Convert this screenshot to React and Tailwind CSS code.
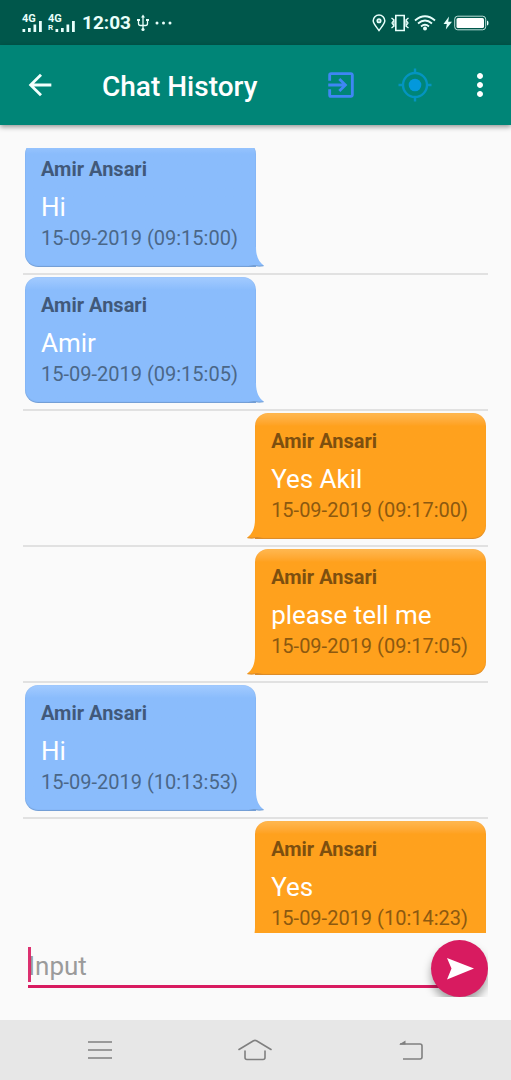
import { MdArrowBack, MdExitToApp, MdMoreVert } from "react-icons/md";

const messages = [
  { name: "Amir Ansari", text: "Hi", time: "15-09-2019 (09:15:00)", mine: false },
  { name: "Amir Ansari", text: "Amir", time: "15-09-2019 (09:15:05)", mine: false },
  { name: "Amir Ansari", text: "Yes Akil", time: "15-09-2019 (09:17:00)", mine: true },
  { name: "Amir Ansari", text: "please tell me", time: "15-09-2019 (09:17:05)", mine: true },
  { name: "Amir Ansari", text: "Hi", time: "15-09-2019 (10:13:53)", mine: false },
  { name: "Amir Ansari", text: "Yes", time: "15-09-2019 (10:14:23)", mine: true },
];

function SignalBars() {
  return (
    <svg className="h-2 w-5" viewBox="0 0 20 8" overflow="visible" fill="currentColor" aria-hidden="true">
      <path d="M0.500 5h2.700v3h-2.700zM6 4h2.700v4h-2.700zM11.500 0.500h2.700v7.500h-2.700zM17-3h2.800v11h-2.800z" />
    </svg>
  );
}

function StatusBar() {
  return (
    <div className="flex h-[45px] shrink-0 items-center bg-[#00574b] px-[22px] text-[#e8fffb]">
      <div className="flex w-[26px] flex-col">
        <span className="text-[11px] leading-[10px] font-bold">4G</span>
        <SignalBars />
      </div>
      <div className="flex w-[34px] flex-col">
        <span className="text-[11px] leading-[10px] font-bold">4G</span>
        <div className="flex h-2 items-center gap-[2px]">
          <span className="text-[8px] leading-[8px] font-bold">R</span>
          <SignalBars />
        </div>
      </div>
      <span className="text-[19px] leading-6 font-bold">12:03</span>
      <svg className="ml-[5px] h-[18px] w-[14px]" viewBox="0 0 14 18" fill="none" stroke="currentColor" strokeWidth="1.300" aria-hidden="true">
        <path d="M7 2v13M2.500 6v3.500q0 2 2 2h5q2 0 2-2v-3.500" />
        <path d="M7 0.500l2 3h-4zM1 5h3v2h-3zM10 5h3v2h-3z" fill="currentColor" stroke="none" />
        <circle cx="7" cy="15.500" r="1.600" fill="currentColor" stroke="none" />
      </svg>
      <svg className="ml-[5px] h-[4px] w-[18px]" viewBox="0 0 18 4" fill="currentColor" aria-hidden="true">
        <circle cx="2" cy="2" r="1.500" />
        <circle cx="8.500" cy="2" r="1.500" />
        <circle cx="15" cy="2" r="1.500" />
      </svg>
      <div className="ml-auto flex items-center">
        <svg className="h-[18px] w-[14px]" viewBox="0 0 14 18" fill="none" stroke="currentColor" strokeWidth="1.500" aria-hidden="true">
          <path d="M7 16.500C4 12.500 1.200 9.500 1.200 6.800a5.800 5.800 0 0 1 11.600 0C12.800 9.500 10 12.500 7 16.500z" />
          <circle cx="7" cy="6.800" r="1.800" fill="currentColor" fillOpacity="0.500" />
        </svg>
        <svg className="ml-[5px] h-[18px] w-[18px]" viewBox="0 0 18 18" fill="none" stroke="currentColor" strokeWidth="1.600" aria-hidden="true">
          <path d="M4.800 1.500h8.400v15h-8.400z" />
          <path d="M0.500 4l2.500 2-2 3 2 3-2.500 2M17.500 4l-2.500 2 2 3-2 3 2.500 2M3 6v6M15 6v6" strokeWidth="1.300" />
        </svg>
        <svg className="ml-[5px] h-[16px] w-[22px]" viewBox="0 0 22 16" fill="none" stroke="currentColor" strokeWidth="1.800" aria-hidden="true">
          <path d="M1 5.500Q11-3 21 5.500M4 8.500Q11 2.500 18 8.500M7 11.500Q11 8 15 11.500" />
          <circle cx="11" cy="13.500" r="2" fill="currentColor" stroke="none" />
        </svg>
        <svg className="ml-[7px] h-[14px] w-[9px]" viewBox="0 0 9 14" fill="currentColor" aria-hidden="true">
          <path d="M6 0.500L0.500 8h3.300L2.800 13.500 9 5.800H5.200z" />
        </svg>
        <svg className="ml-[2px] h-[16px] w-[35px]" viewBox="0 0 35 16" fill="none" aria-hidden="true">
          <rect x="0.700" y="1.200" width="31" height="13.600" rx="3" stroke="currentColor" strokeOpacity="0.800" />
          <rect x="2.500" y="3" width="27.500" height="10" rx="1.500" fill="#ffffff" />
          <path d="M33 5.500q1.500 0 1.500 2.500t-1.500 2.500z" fill="currentColor" />
        </svg>
      </div>
    </div>
  );
}

function AppBar() {
  return (
    <header className="relative flex h-20 shrink-0 items-center bg-[#008577] shadow-[0_2px_5px_rgba(0,0,0,0.4)]">
      <button type="button" aria-label="Back" className="flex h-full w-20 items-center justify-center">
        <MdArrowBack className="size-[34px] text-[#f2fffd]" />
      </button>
      <h1 className="ml-[22px] flex-1 pt-1 text-[28px] leading-8 font-medium whitespace-nowrap text-white">Chat History</h1>
      <button type="button" aria-label="Exit" className="flex h-full w-20 items-center justify-center">
        <MdExitToApp className="size-[34px] text-[#3f86f4]" />
      </button>
      <button type="button" aria-label="My location" className="flex h-full w-[68px] items-center justify-center">
        <svg className="size-9" viewBox="0 0 36 36" aria-hidden="true">
          <circle cx="18" cy="18" r="12" fill="none" stroke="#0494c0" strokeWidth="2.400" />
          <path d="M18 1.500v5M18 29.500v5M1.500 18h5M29.500 18h5" stroke="#0494c0" strokeWidth="2.400" />
          <circle cx="18" cy="18" r="6.300" fill="#0398dc" />
        </svg>
      </button>
      <button type="button" aria-label="More options" className="flex h-full w-[62px] items-center justify-center">
        <MdMoreVert className="size-9 text-white" />
      </button>
    </header>
  );
}

function Tail({ mine }) {
  if (mine) {
    return (
      <svg className="absolute bottom-0 -left-2 h-5 w-4" viewBox="0 0 16 20" aria-hidden="true">
        <path d="M8 0C8 10 5 15 0 18.800Q5 19.600 10 18.500L16 19V0z" fill="#ffa11d" />
        <path d="M0.500 18.800Q5 19.600 10 18.500L16 19.500" fill="none" stroke="#d98a2b" />
      </svg>
    );
  }
  return (
    <svg className="absolute -right-2 bottom-0 h-5 w-4" viewBox="0 0 16 20" aria-hidden="true">
      <path d="M8 0C8 10 11 15 16 18.800Q11 19.600 6 18.500L0 19V0z" fill="#8abcfc" />
      <path d="M15.500 18.800Q11 19.600 6 18.500L0 19.500" fill="none" stroke="#739dd2" />
    </svg>
  );
}

function Message({ name, text, time, mine }) {
  const bubble = mine
    ? "rounded-br-[13px] bg-[#ffa11d] bg-linear-to-b from-[#ffb850] to-[#ffa11d] to-[13px] shadow-[inset_0_-1px_1px_#d98a2b,inset_0_0_1px_#f0a040]"
    : "rounded-bl-[13px] bg-[#8abcfc] bg-linear-to-b from-[#a3cbff] to-[#8abcfc] to-[13px] shadow-[inset_0_-1px_1px_#739dd2,inset_0_0_1px_#7dabe4]";
  return (
    <li className={`flex border-b-2 border-[#e1e1e1] px-[2px] pt-[2px] pb-[6px] ${mine ? "justify-end" : "justify-start"}`}>
      <article className={`relative rounded-t-[13px] pt-[15px] pr-[18px] pb-[15px] pl-4 ${bubble}`}>
        <Tail mine={mine} />
        <h2 className={`text-[20px] leading-[26px] font-bold ${mine ? "text-[#7d4f0f]" : "text-[#41597a]"}`}>{name}</h2>
        <p className="mt-2 text-[26px] leading-[34px] text-white">{text}</p>
        <p className={`text-[20px] leading-7 ${mine ? "text-[#8c5910]" : "text-[#4a6788]"}`}>{time}</p>
      </article>
    </li>
  );
}

function Composer() {
  return (
    <form className="mt-[7px] flex h-[57px] shrink-0 overflow-hidden" onSubmit={(e) => e.preventDefault()}>
      <div className="relative ml-[5px] flex min-w-0 flex-1 pb-[9px]">
        <input
          type="text"
          aria-label="Input"
          placeholder="Input"
          className="min-w-0 flex-1 border-b-3 border-[#d81b60] bg-transparent pt-2 text-[26px] text-[#333333] caret-[#d81b60] outline-none placeholder:text-[#9b9b9b]"
        />
        <span className="absolute top-[7px] left-0 h-[35px] w-[3px] bg-[#d81b60]/90" />
      </div>
      <button
        type="submit"
        aria-label="Send"
        className="relative -ml-4 flex size-[57px] shrink-0 items-center justify-center rounded-full bg-[#d81b60] shadow-[0_6px_9px_rgba(0,0,0,0.35)]"
      >
        <svg className="h-6 w-7" viewBox="0 0 28 24" fill="#ffffff" aria-hidden="true">
          <path d="M1 1L28 11.500 1 22.500 5.500 11.500z" />
        </svg>
      </button>
    </form>
  );
}

function NavBar() {
  return (
    <nav className="flex h-[60px] shrink-0 items-center justify-around bg-[#e7e7e7] px-[22px] text-[#808080]">
      <button type="button" aria-label="Recent apps" className="flex h-full w-20 items-center justify-center">
        <svg className="h-5 w-6" viewBox="0 0 24 20" stroke="currentColor" strokeWidth="1.600" aria-hidden="true">
          <path d="M0 2h24M0 10h24M0 18h24" />
        </svg>
      </button>
      <button type="button" aria-label="Home" className="flex h-full w-20 items-center justify-center">
        <svg className="h-[22px] w-[34px]" viewBox="0 0 34 22" fill="none" stroke="currentColor" strokeWidth="1.600" strokeLinecap="round" aria-hidden="true">
          <path d="M1 10.500L15.500 1.800q1.500-0.800 3 0L33 10.500M7 12v6.500q0 2 2 2h16q2 0 2-2V12" />
        </svg>
      </button>
      <button type="button" aria-label="Navigate back" className="flex h-full w-20 items-center justify-center">
        <svg className="h-5 w-6" viewBox="0 0 24 20" fill="none" stroke="currentColor" strokeWidth="1.600" aria-hidden="true">
          <path d="M1 4h20q2 0 2 2v11q0 2-2 2H4" />
          <path d="M0 4.500L6.500 0.500V4.500z" fill="currentColor" stroke="none" />
        </svg>
      </button>
    </nav>
  );
}

export default function App() {
  return (
    <div className="flex h-screen flex-col bg-[#fafafa] font-[Roboto,sans-serif]">
      <StatusBar />
      <AppBar />
      <main className="flex min-h-0 flex-1 flex-col p-[23px]">
        <div className="min-h-0 flex-1 overflow-hidden">
          <ul className="-mt-[9px]">
            {messages.map((m) => (
              <Message key={m.time} {...m} />
            ))}
          </ul>
        </div>
        <Composer />
      </main>
      <NavBar />
    </div>
  );
}
